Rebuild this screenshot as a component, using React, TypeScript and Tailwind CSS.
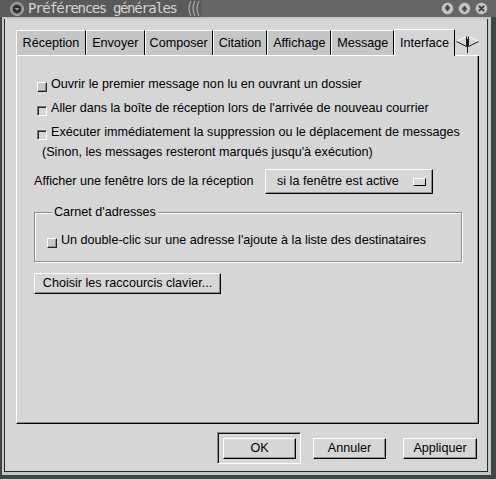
import React from 'react';

const tabs = [
  { label: 'Réception', w: 'w-[70px]' },
  { label: 'Envoyer', w: 'w-[59px]' },
  { label: 'Composer', w: 'w-[68px]' },
  { label: 'Citation', w: 'w-[55px]' },
  { label: 'Affichage', w: 'w-[64px]' },
  { label: 'Message', w: 'w-[63px]' },
];

const raised =
  'border-t border-l border-t-white border-l-white border-r border-b border-r-black border-b-black shadow-[inset_-1px_-1px_0_#8e8e8e]';

const CheckBox = ({ sunken }: { sunken?: boolean }) =>
  sunken ? (
    <span className="block w-[10px] h-[10px] shrink-0 border-t border-l border-t-[#7a7a7a] border-l-[#7a7a7a] border-r border-b border-r-white border-b-white shadow-[inset_1px_1px_0_#222]" />
  ) : (
    <span className="block w-[10px] h-[10px] shrink-0 bg-[#c8c8c8] border-t border-l border-t-white border-l-white border-r border-b border-r-[#222] border-b-[#222] shadow-[inset_-1px_-1px_0_#8e8e8e]" />
  );

const CheckRow = ({ text, sunken }: { text: string; sunken?: boolean }) => (
  <div className="h-[24px] flex items-center pl-[3px]">
    <div className="mt-[5px]">
      <CheckBox sunken={sunken} />
    </div>
    <span className="ml-[4px]">{text}</span>
  </div>
);

const TitleButton = ({ kind }: { kind: 'min' | 'max' | 'close' }) => (
  <svg width="13" height="13" viewBox="0 0 13 13">
    <circle cx="6.5" cy="6.5" r="6" fill="#b9b9b9" stroke="#7c7c7c" />
    <circle cx="6.5" cy="6.5" r="4.6" fill="none" stroke="#dcdcdc" strokeWidth="0.8" />
    {kind === 'min' && <path d="M3.6 5.2 H9.4 L6.5 9.2 Z M5.4 3.2 H7.6 V5.4 H5.4 Z" fill="#3c3c3c" />}
    {kind === 'max' && <path d="M3.6 7.8 H9.4 L6.5 3.8 Z M5.4 7.6 H7.6 V9.8 H5.4 Z" fill="#3c3c3c" />}
    {kind === 'close' && (
      <path d="M4.3 4.3 L8.7 8.7 M8.7 4.3 L4.3 8.7" stroke="#3c3c3c" strokeWidth="1.7" strokeLinecap="round" />
    )}
  </svg>
);

export default function App() {
  return (
    <div className="w-[496px] h-[479px] flex flex-col bg-[#3e4646] font-['Liberation_Sans',Arial,sans-serif] text-[12.6px] leading-[15px] text-black overflow-hidden">
      {/* title bar */}
      <div className="h-[17px] flex items-center bg-[#5a5a5a] shrink-0">
        <div className="ml-[9px] w-[15px] h-[15px] flex items-center justify-center">
          <svg width="14" height="14" viewBox="0 0 14 14">
            <circle cx="7" cy="7" r="6.5" fill="#8a8a8a" stroke="#b0b0b0" />
            <circle cx="7" cy="7" r="4.2" fill="#2e2e2e" />
            <path d="M4.6 6 H9.4 L7 8.8 Z" fill="#9a9a9a" />
          </svg>
        </div>
        <span className="ml-[4px] font-['DejaVu_Sans_Mono',monospace] text-[14px] tracking-[-1.35px] text-[#d2d2d2] leading-[17px]">
          Préférences générales
        </span>
        <svg className="ml-[10px]" width="14" height="17" viewBox="0 0 14 17">
          <path d="M4 1 Q0 8.5 4 16 M8 1 Q4 8.5 8 16 M12 1 Q8 8.5 12 16" fill="none" stroke="#a6a6a6" strokeWidth="1.3" />
        </svg>
        <div className="flex-1 h-full bg-[#656565] flex items-center justify-end pr-[8px] gap-[4px]">
          <TitleButton kind="min" />
          <TitleButton kind="max" />
          <TitleButton kind="close" />
        </div>
      </div>

      {/* window frame */}
      <div className="flex-1 flex bg-[#c4c4c4] border-l-[2px] border-r-[5px] border-b-[4px] border-[#3e4646] pl-[2px] pr-[3px] pb-[3px] pt-[2px]">
        <div className="flex-1 flex flex-col bg-[#d6d6d6] border-l border-r border-b border-[#2a2a2a] pl-[11px] pt-[10px]">
          {/* tabs */}
          <div className="flex items-end h-[27px] w-[463px]">
            {tabs.map((t) => (
              <div key={t.label} className={`${t.w} h-[26px] border-b border-white`}>
                <div className="h-full bg-[#c6c6c6] border-t border-l border-white border-r border-r-black flex items-center justify-center">
                  {t.label}
                </div>
              </div>
            ))}
            <div className="w-[61px] h-[27px] border-t border-l border-white border-r border-r-black flex items-center justify-center">
              Interface
            </div>
            <div className="flex-1 h-[26px] border-b border-white pt-[6px] pl-[1px]">
              <svg width="23" height="18" viewBox="0 0 23 18">
                <path d="M10.5 0.5 L0.5 5.5" stroke="#ffffff" fill="none" />
                <path d="M0.5 5.5 L10.5 10.5 V0.5" stroke="#1a1a1a" fill="none" />
                <path d="M11.5 3 V17" stroke="#1a1a1a" />
                <path d="M12.5 0.5 L22.5 5.5" stroke="#ffffff" fill="none" />
                <path d="M12.5 0.5 V10.5 L22.5 5.5" stroke="#1a1a1a" fill="none" />
              </svg>
            </div>
          </div>

          {/* panel */}
          <div className="w-[463px] h-[368px] border-l border-l-white border-r border-b border-r-black border-b-black shadow-[inset_-1px_-1px_0_#8e8e8e] pl-[17px] pt-[16px] flex flex-col">
            <CheckRow text="Ouvrir le premier message non lu en ouvrant un dossier" />
            <CheckRow sunken text="Aller dans la boîte de réception lors de l'arrivée de nouveau courrier" />
            <CheckRow sunken text="Exécuter immédiatement la suppression ou le déplacement de messages" />
            <div className="h-[16px] flex items-center pl-[8px]">
              (Sinon, les messages resteront marqués jusqu'à exécution)
            </div>

            <div className="mt-[9px] h-[25px] flex items-center">
              <span className="w-[231px]">Afficher une fenêtre lors de la réception</span>
              <div className={`${raised} w-[168px] h-[25px] flex items-center pl-[11px] pr-[6px] bg-[#d6d6d6]`}>
                <span>si la fenêtre est active</span>
                <span className="ml-auto block w-[13px] h-[8px] border-t border-l border-t-white border-l-white border-r border-b border-r-black border-b-black" />
              </div>
            </div>

            <fieldset className="mt-[11px] w-[428px] border border-[#8c8c8c] shadow-[inset_1px_1px_0_#ffffff,1px_1px_0_#ffffff] pt-[8px] pb-[9px] pl-[12px]">
              <legend className="ml-[5px] px-[2px] bg-[#d6d6d6]">Carnet d'adresses</legend>
              <div className="h-[24px] flex items-center">
                <div className="mt-[5px]">
                  <CheckBox />
                </div>
                <span className="ml-[4px]">Un double-clic sur une adresse l'ajoute à la liste des destinataires</span>
              </div>
            </fieldset>

            <div className={`${raised} mt-[11px] w-[187px] h-[21px] flex items-center justify-center`}>
              Choisir les raccourcis clavier...
            </div>
          </div>

          {/* buttons */}
          <div className="mt-[8px] flex items-start pr-[10px] justify-end">
            <div className="w-[84px] h-[32px] border-t border-l border-t-[#8c8c8c] border-l-[#8c8c8c] border-r border-b border-r-white border-b-white shadow-[inset_1px_1px_0_#111] p-[4px] pl-[5px] pt-[5px]">
              <div className={`${raised} w-[73px] h-[21px] flex items-center justify-center`}>OK</div>
            </div>
            <div className={`${raised} ml-[12px] mt-[6px] w-[73px] h-[21px] flex items-center justify-center`}>
              Annuler
            </div>
            <div className={`${raised} ml-[17px] mt-[6px] w-[74px] h-[21px] flex items-center justify-center`}>
              Appliquer
            </div>
          </div>
        </div>
      </div>
    </div>
  );
}
